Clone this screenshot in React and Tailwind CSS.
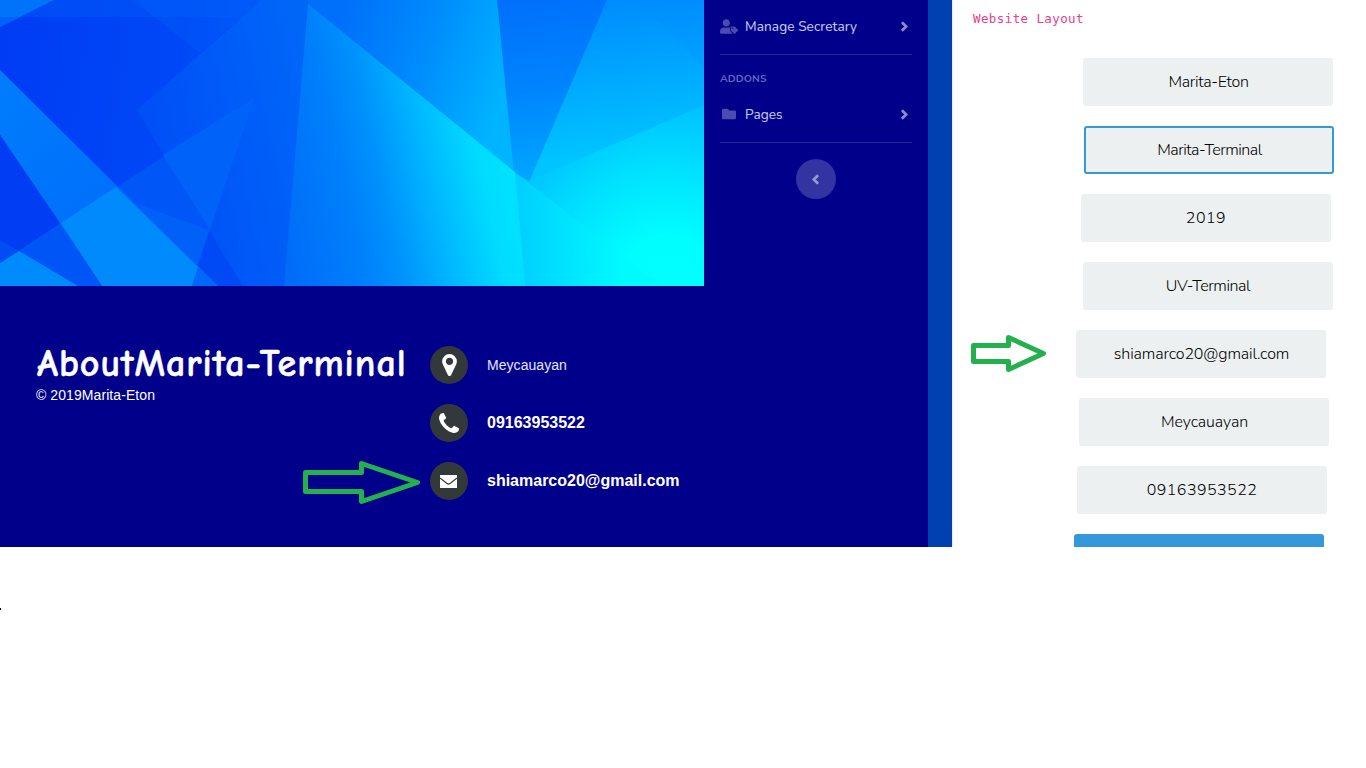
import { FaUserTag, FaFolder, FaAngleRight, FaAngleLeft } from "react-icons/fa";

const fields = [
  { text: "Marita-Eton", box: "ml-[131px]", label: "pl-px tracking-[-0.3px]" },
  { text: "Marita-Terminal", box: "ml-[132px] border-2 border-[#3498db]", label: "pl-px tracking-[-0.48px]" },
  { text: "2019", box: "ml-[129px]", label: "tracking-[0.5px]" },
  { text: "UV-Terminal", box: "ml-[131px]", label: "tracking-[-0.4px]" },
  { text: "shiamarco20@gmail.com", box: "ml-[124px]", label: "pl-px tracking-[-0.13px]" },
  { text: "Meycauayan", box: "ml-[127px]", label: "pl-px tracking-[-0.1px]" },
  { text: "09163953522", box: "ml-[125px]", label: "tracking-[0.45px]" },
];

function Hero() {
  return (
    <svg className="block h-[286px] w-[704px]" viewBox="0 0 704 286" preserveAspectRatio="none">
      <defs>
        <linearGradient id="deep" gradientUnits="userSpaceOnUse" x1="0" y1="80" x2="290" y2="120">
          <stop offset="0" stopColor="#003cf4" />
          <stop offset="0.6" stopColor="#0048f7" />
          <stop offset="1" stopColor="#0058f8" />
        </linearGradient>
        <linearGradient id="mid" gradientUnits="userSpaceOnUse" x1="140" y1="130" x2="310" y2="90">
          <stop offset="0" stopColor="#004ef7" />
          <stop offset="1" stopColor="#0066f8" />
        </linearGradient>
        <linearGradient id="sweep" gradientUnits="userSpaceOnUse" x1="285" y1="250" x2="520" y2="200">
          <stop offset="0" stopColor="#006cf9" />
          <stop offset="0.3" stopColor="#0080fb" />
          <stop offset="0.45" stopColor="#0092fc" />
          <stop offset="0.65" stopColor="#00b6ff" />
          <stop offset="0.87" stopColor="#00dcff" />
          <stop offset="1" stopColor="#00e2ff" />
        </linearGradient>
        <linearGradient id="upper" gradientUnits="userSpaceOnUse" x1="340" y1="20" x2="510" y2="80">
          <stop offset="0" stopColor="#0070fa" />
          <stop offset="0.5" stopColor="#008cfc" />
          <stop offset="1" stopColor="#00b4ff" />
        </linearGradient>
        <linearGradient id="wedge" gradientUnits="userSpaceOnUse" x1="520" y1="0" x2="545" y2="180">
          <stop offset="0" stopColor="#0070fb" />
          <stop offset="0.5" stopColor="#0084fd" />
          <stop offset="1" stopColor="#00a8ff" />
        </linearGradient>
        <linearGradient id="corner" gradientUnits="userSpaceOnUse" x1="620" y1="0" x2="640" y2="150">
          <stop offset="0" stopColor="#008cfd" />
          <stop offset="1" stopColor="#00c4ff" />
        </linearGradient>
        <radialGradient id="cyan" gradientUnits="userSpaceOnUse" cx="668" cy="285" r="190">
          <stop offset="0" stopColor="#00ffff" />
          <stop offset="0.25" stopColor="#00feff" />
          <stop offset="0.6" stopColor="#00e2ff" />
          <stop offset="1" stopColor="#00bcff" />
        </radialGradient>
        <linearGradient id="floor" gradientUnits="userSpaceOnUse" x1="515" y1="260" x2="625" y2="260">
          <stop offset="0" stopColor="#00ceff" />
          <stop offset="1" stopColor="#00fbff" />
        </linearGradient>
        <linearGradient id="beam" gradientUnits="userSpaceOnUse" x1="0" y1="90" x2="130" y2="240">
          <stop offset="0" stopColor="#007cfd" />
          <stop offset="1" stopColor="#006cfa" />
        </linearGradient>
      </defs>
      <rect width="704" height="286" fill="url(#deep)" />
      <path d="M0 0H310V17H0Z" fill="#0062f8" opacity=".38" />
      <path d="M0 0H54L0 27Z" fill="#0073fa" />
      <path d="M0 17H20L0 27Z" fill="#0062f8" />
      <path d="M133 0H262L200 53Z" fill="#0060f8" opacity=".35" />
      <path d="M262 0H315L290 286H243L137 110Z" fill="url(#mid)" />
      <path d="M0 263L255 97L210 230L194 286H0Z" fill="#0056f7" />
      <path d="M163 155L255 97L210 230Z" fill="#0062f8" />
      <path d="M140 205L210 230L194 286H170Z" fill="#0060f8" />
      <path d="M209 231L243 286H191Z" fill="#004af6" />
      <path d="M0 70L218 286H102L0 135Z" fill="url(#beam)" />
      <path d="M61 223L116 187L198 267L192 286H102Z" fill="#008afb" />
      <path d="M0 135L60 223L0 263Z" fill="#003df3" />
      <path d="M0 263L60 224L102 286H0Z" fill="#0055f7" />
      <path d="M0 240L19 251L0 263Z" fill="#004cf5" />
      <path d="M0 263L19 251L78 286H0Z" fill="#008bfd" />
      <path d="M198 267L218 286H192Z" fill="#0068f9" />
      <path d="M330 0H704V286H520L515 172L330 20Z" fill="#00a8ff" />
      <path d="M308 0H499L516 174L308 6Z" fill="url(#upper)" />
      <path d="M497 0H609L534 183L514 174Z" fill="url(#wedge)" />
      <path d="M607 0H704V106L529 182Z" fill="url(#corner)" />
      <path d="M637 0H704V68Z" fill="#0084fc" opacity=".15" />
      <path d="M515 173L529 181L704 105V286H520Z" fill="url(#cyan)" />
      <path d="M514.500 172L625 258L660 286H524Z" fill="url(#floor)" />
      <path d="M308 4L515 172L525.500 286H284Z" fill="url(#sweep)" />
    </svg>
  );
}

function Divider() {
  return <div className="h-px w-48 bg-white/15" />;
}

function NavItem({ icon, label, tracking }) {
  return (
    <div className="flex h-6 w-48 items-center text-[13.6px] text-white/80">
      <span className="flex w-[18px] shrink-0 justify-center text-[#4c4cae]">{icon}</span>
      <span className={"ml-[7px] grow whitespace-nowrap pt-[2px] font-['Nunito','Lato',sans-serif] " + tracking}>{label}</span>
      <FaAngleRight className="size-[15px] stroke-[#8c8ccb] stroke-[20] text-[#8c8ccb]" />
    </div>
  );
}

function Contact({ icon, children, className }) {
  return (
    <div className="flex h-[38px] items-center gap-[19px]">
      <span className="flex size-[38px] shrink-0 items-center justify-center rounded-full bg-[#33383b]">{icon}</span>
      <span className={"whitespace-nowrap " + className}>{children}</span>
    </div>
  );
}

export default function App() {
  return (
    <div className="relative h-[768px] w-[1366px] overflow-hidden bg-white font-['Liberation_Sans',sans-serif]">
      <div className="flex h-[547px] overflow-hidden">
        <main className="w-[704px] bg-[#00008b] text-white">
          <Hero />
          <footer className="flex pt-[60px]">
            <section className="w-[430px] pl-[35px]">
              <h1 className="h-[40px] whitespace-nowrap pl-[2px] pt-[1px] font-['Comic_Sans_MS','Comic_Neue','Lato',sans-serif] text-[38px] font-bold leading-[34px] tracking-[0.95px] [-webkit-text-stroke:0.5px_white]">
                AboutMarita-Terminal
              </h1>
              <p className="pl-px text-[14px] leading-[18px] tracking-[0.08px]">© 2019Marita-Eton</p>
            </section>
            <section className="flex flex-col gap-5">
              <Contact
                className="pt-px text-[14px] font-normal tracking-[0.05px] text-white/90"
                icon={
                  <svg className="h-[22px] w-[15px]" viewBox="0 0 1024 1536" fill="white">
                    <path d="M768 512q0-106-75-181t-181-75-181 75-75 181 75 181 181 75 181-75 75-181zm256 0q0 109-33 179l-364 774q-16 33-47.5 52t-67.5 19-67.5-19-46.5-52l-365-774q-33-70-33-179 0-212 150-362t362-150 362 150 150 362z" />
                  </svg>
                }
              >
                Meycauayan
              </Contact>
              <Contact
                className="pb-px text-[16px] font-bold"
                icon={
                  <svg className="size-5" viewBox="0 0 1408 1408" fill="white">
                    <path d="M1408 1112q0 27-10 70.5t-21 68.5q-21 50-122 106-94 51-186 51-27 0-53-3.5t-57.5-12.5-47-14.5-55.5-20.5-49-18q-98-35-175-83-127-79-264-216t-216-264q-48-77-83-175-3-9-18-49t-20.5-55.5-14.5-47-12.5-57.5-3.5-53q0-92 51-186 56-101 106-122 25-11 68.5-21t70.5-10q14 0 21 3 18 6 53 76 11 19 30 54t35 63.5 31 53.5q3 4 17.5 25t21.5 35.5 7 28.5q0 20-28.5 50t-62 55-62 53-28.5 46q0 9 5 22.5t8.5 20.5 14 24 11.5 19q76 137 174 235t235 174q2 1 19 11.5t24 14 20.5 8.5 22.5 5q18 0 46-28.5t53-62 55-62 50-28.5q14 0 28.5 7t35.5 21.5 25 17.5q25 15 53.5 31t63.5 35 54 30q70 35 76 53 3 7 3 21z" />
                  </svg>
                }
              >
                09163953522
              </Contact>
              <Contact
                className="pb-px text-[16px] font-bold"
                icon={
                  <svg className="mr-px h-[13px] w-[17px]" viewBox="0 0 17 13">
                    <rect width="17" height="13" fill="white" />
                    <path d="M0 3L7 8.5Q8.5 9.7 10 8.5L17 3" fill="none" stroke="#33383b" strokeWidth="1.1" />
                  </svg>
                }
              >
                shiamarco20@gmail.com
              </Contact>
            </section>
          </footer>
        </main>

        <aside className="flex w-56 flex-col items-center bg-[#00008b] pt-[14px]">
          <NavItem icon={<FaUserTag className="h-[15px] w-[18px]" />} label="Manage Secretary" tracking="tracking-[0.1px]" />
          <div className="mt-4"><Divider /></div>
          <h2 className="mt-4 h-4 w-48 font-['Nunito','Lato',sans-serif] text-[10.4px] font-bold leading-4 tracking-[0.1px] text-[#6666b9]">ADDONS</h2>
          <div className="mt-[15px]">
            <NavItem icon={<FaFolder className="size-[14px]" />} label="Pages" tracking="tracking-[0.1px]" />
          </div>
          <div className="mt-4"><Divider /></div>
          <button className="mt-4 flex size-10 items-center justify-center rounded-full bg-white/20">
            <FaAngleLeft className="mr-px size-[15px] stroke-[#9999d1] stroke-[20] text-[#9999d1]" />
          </button>
        </aside>

        <div className="w-6 bg-[#0040b0]" />

        <section className="w-[414px] border-l border-[#ebebf3] pt-[10px]">
          <p className="h-[18px] whitespace-nowrap pl-[20px] font-['DejaVu_Sans_Mono',monospace] text-[12.5px] leading-[18px] tracking-[0.4px] text-[#e83e8c]">
            Website Layout
          </p>
          <div className="mt-[30px] flex flex-col gap-5 font-['Nunito','Lato',sans-serif] font-light">
            {fields.map((f) => (
              <div key={f.text} className={"flex h-12 w-[250px] shrink-0 items-center justify-center rounded-[3px] bg-[#ecf0f1] -translate-x-px text-[16px] text-black " + f.box}>
                <span className={"whitespace-nowrap " + f.label}>{f.text}</span>
              </div>
            ))}
            <div className="ml-[121px] h-12 w-[250px] rounded-[3px] bg-[#3498db]" />
          </div>
        </section>
      </div>

      <svg className="absolute left-[295px] top-[450px] h-[60px] w-[140px]" viewBox="0 0 140 60" fill="none" stroke="#22b14c" strokeWidth="5" strokeLinejoin="round">
        <path d="M10.5 22.5H66.5V13.5L122.5 32.5L66.5 51.5V41.5H10.5Z" />
      </svg>
      <svg className="absolute left-[965px] top-[330px] h-12 w-[90px]" viewBox="0 0 90 48" fill="none" stroke="#22b14c" strokeWidth="5" strokeLinejoin="round">
        <path d="M8.500 15.500H43.500V7.500L78.500 23.500L43.500 39.500V31.500H8.500Z" />
      </svg>
      <span className="absolute left-0 top-[608px] h-[2px] w-px bg-black" />
    </div>
  );
}
